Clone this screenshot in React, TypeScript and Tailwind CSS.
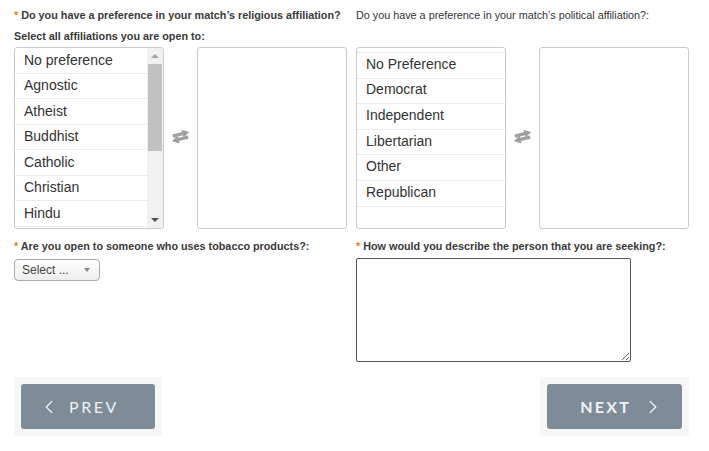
import { ChevronLeft, ChevronRight } from "lucide-react";

const religions = ["No preference", "Agnostic", "Atheist", "Buddhist", "Catholic", "Christian", "Hindu"];
const politics = ["No Preference", "Democrat", "Independent", "Libertarian", "Other", "Republican"];

function Star() {
  return <span className="text-[#d9822b]">* </span>;
}

function Swap() {
  return (
    <div className="flex w-[33px] items-center justify-center pb-[4px]">
      <svg width="21" height="15" viewBox="0 0 20 14" className="-rotate-[14deg]">
        <g fill="#a0a0a0">
          <rect x="3" y="3.3" width="10.5" height="3.2" />
          <polygon points="12.5,1 19,4.9 12.5,8.8" />
          <rect x="6.5" y="7.7" width="10.5" height="3.2" />
          <polygon points="7.5,5.4 1,9.3 7.5,13.2" />
        </g>
      </svg>
    </div>
  );
}

function EmptyBox() {
  return <div className="h-[182px] w-[150px] rounded-[3px] border border-[#cccccc] bg-white" />;
}

export default function App() {
  return (
    <div className="min-h-screen w-[709px] bg-white pl-[14px] pr-[20px] pt-[9px] font-['Liberation_Sans',Arial,sans-serif] text-[#333]">
      <div className="grid grid-cols-[333px_333px] gap-x-[9px]">
        {/* Religion */}
        <div>
          <p className="h-[13px] text-[10.8px] leading-[13px] font-bold text-[#3a3a3a]">
            <Star />
            Do you have a preference in your match’s religious affiliation?
          </p>
          <p className="mt-[8px] h-[13px] text-[10.8px] leading-[13px] font-bold text-[#3a3a3a]">
            Select all affiliations you are open to:
          </p>
          <div className="mt-[4px] flex">
            <div className="flex h-[182px] w-[150px] overflow-hidden rounded-[3px] border border-[#cccccc] bg-white">
              <ul className="flex-1">
                {religions.map((r) => (
                  <li
                    key={r}
                    className="flex h-[25.5px] items-center border-b border-[#ebebeb] pl-[9px] text-[14px] text-[#333]"
                  >
                    {r}
                  </li>
                ))}
              </ul>
              <div className="flex w-[16px] flex-col bg-[#f1f1f1]">
                <div className="flex h-[16px] items-center justify-center">
                  <div className="h-0 w-0 border-x-[4px] border-b-[4px] border-x-transparent border-b-[#a3a3a3]" />
                </div>
                <div className="mx-[1px] h-[87px] bg-[#c1c1c1]" />
                <div className="flex-1" />
                <div className="flex h-[16px] items-center justify-center">
                  <div className="h-0 w-0 border-x-[4px] border-t-[4px] border-x-transparent border-t-[#505050]" />
                </div>
              </div>
            </div>
            <Swap />
            <EmptyBox />
          </div>
        </div>

        {/* Politics */}
        <div>
          <p className="h-[13px] text-[10.8px] leading-[13px] text-[#333]">
            Do you have a preference in your match’s political affiliation?:
          </p>
          <div className="mt-[25px] flex">
            <div className="h-[182px] w-[150px] overflow-hidden rounded-[3px] border border-[#cccccc] bg-white">
              <ul className="mt-[4px] border-t border-[#ebebeb]">
                {politics.map((p) => (
                  <li
                    key={p}
                    className="flex h-[25.6px] items-center border-b border-[#ebebeb] pl-[9px] pb-[2px] text-[14px] text-[#333]"
                  >
                    {p}
                  </li>
                ))}
              </ul>
            </div>
            <Swap />
            <EmptyBox />
          </div>
        </div>

        {/* Tobacco */}
        <div className="mt-[11px]">
          <p className="h-[13px] text-[10.8px] leading-[13px] font-bold text-[#3a3a3a]">
            <Star />
            Are you open to someone who uses tobacco products?:
          </p>
          <div className="mt-[6px] flex h-[22px] w-[86px] items-center justify-between rounded-[4px] border border-[#aaaaaa] bg-gradient-to-b from-white to-[#eeeeee] pl-[7px] pr-[9px] text-[12px] text-[#444]">
            <span>Select ...</span>
            <div className="h-0 w-0 border-x-[3.5px] border-t-[4px] border-x-transparent border-t-[#888]" />
          </div>
        </div>

        {/* Description */}
        <div className="mt-[11px]">
          <p className="h-[13px] text-[10.8px] leading-[13px] font-bold text-[#3a3a3a]">
            <Star />
            How would you describe the person that you are seeking?:
          </p>
          <textarea className="mt-[5px] block h-[104px] w-[275px] rounded-[2px] border border-[#555] bg-white" />
        </div>
      </div>

      {/* Navigation */}
      <div className="mt-[15px] flex justify-between">
        <div className="bg-[#f7f7f7] p-[7px]">
          <button className="flex h-[45px] w-[134px] items-center gap-[9px] rounded-[3px] bg-[#7f8c98] pl-[17px] font-['Lato',sans-serif] text-[16px] font-normal tracking-[0.16em] text-[#eef1f3]">
            <ChevronLeft size={22} strokeWidth={1.4} />
            PREV
          </button>
        </div>
        <div className="bg-[#f7f7f7] p-[7px]">
          <button className="flex h-[45px] w-[135px] items-center justify-end gap-[11px] rounded-[3px] bg-[#7f8c98] pr-[18px] font-['Lato',sans-serif] text-[16px] font-bold tracking-[0.14em] text-[#eef1f3]">
            NEXT
            <ChevronRight size={22} strokeWidth={1.5} />
          </button>
        </div>
      </div>
    </div>
  );
}
